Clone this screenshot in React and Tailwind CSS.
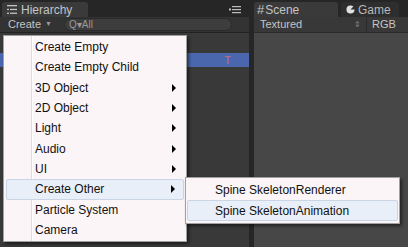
import React from 'react';

const menuItems = [
  { label: 'Create Empty' },
  { label: 'Create Empty Child' },
  { label: '3D Object', sub: true },
  { label: '2D Object', sub: true },
  { label: 'Light', sub: true },
  { label: 'Audio', sub: true },
  { label: 'UI', sub: true },
  { label: 'Create Other', sub: true, active: true },
  { label: 'Particle System' },
  { label: 'Camera' },
];

const Arrow = () => (
  <span className="absolute right-[8px] top-1/2 -translate-y-1/2 w-0 h-0 border-y-[4px] border-y-transparent border-l-[4px] border-l-black" />
);

const PanelMenuIcon = () => (
  <svg width="12" height="9" viewBox="0 0 12 9" className="text-[#bdbdbd]">
    <rect x="0" y="3.5" width="2" height="2" fill="currentColor" />
    <rect x="3" y="1" width="9" height="1.2" fill="currentColor" />
    <rect x="3" y="4" width="9" height="1.2" fill="currentColor" />
    <rect x="3" y="7" width="9" height="1.2" fill="currentColor" />
  </svg>
);

export default function App() {
  return (
    <div className="relative w-[408px] h-[247px] overflow-hidden bg-[#262626] flex font-['Liberation_Sans',Arial,sans-serif]">
      {/* Hierarchy panel */}
      <div className="w-[249px] flex flex-col">
        <div className="h-[17px] flex items-end justify-between pr-[8px]">
          <div className="h-[15px] w-[86px] ml-[2px] bg-[#3a3a3a] rounded-t-[3px] flex items-center gap-[4px] pl-[5px] text-[12px] text-[#c4c4c4]">
            <svg width="10" height="9" viewBox="0 0 10 9" className="text-[#c4c4c4]">
              <rect x="0" y="0" width="10" height="1.3" fill="currentColor" />
              <rect x="0" y="3.8" width="2" height="1.3" fill="currentColor" />
              <rect x="3" y="3.8" width="7" height="1.3" fill="currentColor" />
              <rect x="0" y="7.6" width="2" height="1.3" fill="currentColor" />
              <rect x="3" y="7.6" width="7" height="1.3" fill="currentColor" />
            </svg>
            <span>Hierarchy</span>
          </div>
          <div className="mb-[3px]"><PanelMenuIcon /></div>
        </div>
        <div className="h-[16px] bg-[#333333] border-b border-[#222] flex items-center pl-[8px] text-[11px] text-[#c4c4c4]">
          <span>Create</span>
          <span className="ml-[4px] text-[7px] text-[#999]">▼</span>
          <div className="ml-[12px] h-[13px] w-[168px] rounded-full bg-[#3d3d3d] border border-[#2a2a2a] flex items-center pl-[4px] text-[10px] text-[#9a9a9a]">
            Q▾All
          </div>
        </div>
        <div className="flex-1 bg-[#393939] pt-[20px]">
          <div className="h-[14px] bg-[#4a67ad] flex justify-end pr-[18px]">
            <span className="text-[11px] leading-[14px] text-[#c86a7a]">T</span>
          </div>
        </div>
      </div>

      {/* divider */}
      <div className="w-[5px] bg-[#262626]" />

      {/* Scene panel */}
      <div className="flex-1 flex flex-col">
        <div className="h-[17px] flex items-end gap-[3px]">
          <div className="h-[15px] w-[84px] bg-[#3a3a3a] rounded-t-[3px] flex items-center pl-[3px] text-[12px] text-[#c4c4c4]">
            <span className="text-[13px] mr-[1px]">#</span>Scene
          </div>
          <div className="h-[15px] w-[58px] bg-[#2e2e2e] rounded-t-[3px] flex items-center pl-[5px] gap-[3px] text-[12px] text-[#b8b8b8]">
            <svg width="9" height="9" viewBox="0 0 10 10">
              <path d="M5 0.5 A4.5 4.5 0 1 0 9.5 5 L5 5 L8.2 1.8 A4.5 4.5 0 0 0 5 0.5 Z" fill="#e0e0e0" />
            </svg>
            <span>Game</span>
          </div>
        </div>
        <div className="h-[16px] bg-[#383838] border-b border-[#2a2a2a] flex items-center text-[11px] text-[#c4c4c4]">
          <span className="pl-[6px] w-[100px]">Textured</span>
          <span className="text-[8px] text-[#888] w-[12px]">⇕</span>
          <span className="h-full w-px bg-[#2a2a2a] mr-[5px]" />
          <span>RGB</span>
        </div>
        <div className="flex-1 bg-[#474747]" />
      </div>

      {/* Context menu */}
      <div className="absolute left-[3px] top-[35px] w-[184px] h-[207px] bg-[#fcf5f7] border border-[#a0a0a0] shadow-[2px_2px_3px_rgba(0,0,0,0.5)] py-[1px] text-[12px] text-[#111]">
        <div className="absolute left-[27px] top-0 bottom-0 w-px bg-[#e2dadd]" />
        <div className="absolute left-[28px] top-0 bottom-0 w-px bg-white" />
        {menuItems.map((item) => (
          <div
            key={item.label}
            className={`relative h-[20.33px] flex items-center pl-[29px] mx-[2px] ${
              item.active ? 'bg-[#e9eff8] border border-[#c9d5e4] rounded-[2px]' : ''
            }`}
          >
            <span className={item.active ? '-ml-px' : ''}>{item.label}</span>
            {item.sub && <Arrow />}
          </div>
        ))}
      </div>

      {/* Submenu */}
      <div className="absolute left-[185px] top-[177px] w-[215px] h-[47px] bg-[#fcf5f7] border border-[#a0a0a0] shadow-[2px_2px_3px_rgba(0,0,0,0.5)] py-[2px] text-[12px] text-[#111]">
        <div className="h-[20px] flex items-center pl-[29px]">Spine SkeletonRenderer</div>
        <div className="h-[21px] mx-[1px] bg-[#e9eff8] border border-[#c9d5e4] rounded-[2px] flex items-center pl-[27px]">
          Spine SkeletonAnimation
        </div>
      </div>
    </div>
  );
}
